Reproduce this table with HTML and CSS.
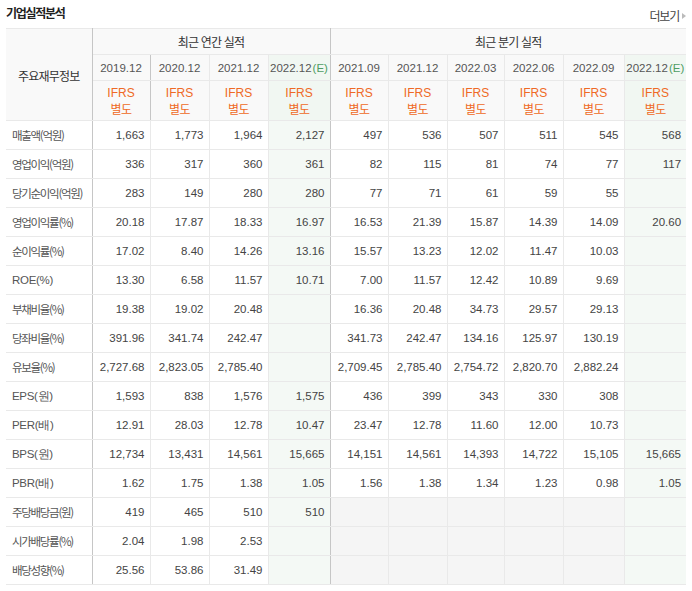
FILE: index.html
```html
<!DOCTYPE html>
<html lang="ko">
<head>
<meta charset="utf-8">
<title>기업실적분석</title>
<link rel="stylesheet" href="styles.css">
</head>
<body>
<div class="wrap">
  <div class="head">
    <h3 class="title">기업실적분석</h3>
    <a class="more" href="#">더보기<span class="tri"></span></a>
  </div>
  <table class="fin">
    <colgroup>
      <col class="c-lab"><col class="c58"><col class="c59"><col class="c59"><col class="c62">
      <col class="c58"><col class="c59"><col class="c57"><col class="c59"><col class="c61"><col class="c62">
    </colgroup>
    <thead>
      <tr class="h1">
        <th rowspan="3" class="lab-h">주요재무정보</th>
        <th colspan="4" class="sep">최근 연간 실적</th>
        <th colspan="6">최근 분기 실적</th>
      </tr>
      <tr class="h2">
        <th>2019.12</th><th>2020.12</th><th>2021.12</th><th class="est sep">2022.12<em>(E)</em></th>
        <th>2021.09</th><th>2021.12</th><th>2022.03</th><th>2022.06</th><th>2022.09</th><th class="est">2022.12<em>(E)</em></th>
      </tr>
      <tr class="h3">
        <th><span class="ifrs">IFRS</span><span class="kind">별도</span></th>
        <th><span class="ifrs">IFRS</span><span class="kind">별도</span></th>
        <th><span class="ifrs">IFRS</span><span class="kind">별도</span></th>
        <th class="est sep"><span class="ifrs">IFRS</span><span class="kind">별도</span></th>
        <th><span class="ifrs">IFRS</span><span class="kind">별도</span></th>
        <th><span class="ifrs">IFRS</span><span class="kind">별도</span></th>
        <th><span class="ifrs">IFRS</span><span class="kind">별도</span></th>
        <th><span class="ifrs">IFRS</span><span class="kind">별도</span></th>
        <th><span class="ifrs">IFRS</span><span class="kind">별도</span></th>
        <th class="est"><span class="ifrs">IFRS</span><span class="kind">별도</span></th>
      </tr>
    </thead>
    <tbody>
      <tr><th>매출액(억원)</th><td>1,663</td><td>1,773</td><td>1,964</td><td class="est sep">2,127</td><td>497</td><td>536</td><td>507</td><td>511</td><td>545</td><td class="est">568</td></tr>
      <tr><th>영업이익(억원)</th><td>336</td><td>317</td><td>360</td><td class="est sep">361</td><td>82</td><td>115</td><td>81</td><td>74</td><td>77</td><td class="est">117</td></tr>
      <tr><th>당기순이익(억원)</th><td>283</td><td>149</td><td>280</td><td class="est sep">280</td><td>77</td><td>71</td><td>61</td><td>59</td><td>55</td><td class="est"></td></tr>
    </tbody>
    <tbody>
      <tr><th>영업이익률(%)</th><td>20.18</td><td>17.87</td><td>18.33</td><td class="est sep">16.97</td><td>16.53</td><td>21.39</td><td>15.87</td><td>14.39</td><td>14.09</td><td class="est">20.60</td></tr>
      <tr><th>순이익률(%)</th><td>17.02</td><td>8.40</td><td>14.26</td><td class="est sep">13.16</td><td>15.57</td><td>13.23</td><td>12.02</td><td>11.47</td><td>10.03</td><td class="est"></td></tr>
      <tr><th class="en">ROE(%)</th><td>13.30</td><td>6.58</td><td>11.57</td><td class="est sep">10.71</td><td>7.00</td><td>11.57</td><td>12.42</td><td>10.89</td><td>9.69</td><td class="est"></td></tr>
    </tbody>
    <tbody>
      <tr><th>부채비율(%)</th><td>19.38</td><td>19.02</td><td>20.48</td><td class="est sep"></td><td>16.36</td><td>20.48</td><td>34.73</td><td>29.57</td><td>29.13</td><td class="est"></td></tr>
      <tr><th>당좌비율(%)</th><td>391.96</td><td>341.74</td><td>242.47</td><td class="est sep"></td><td>341.73</td><td>242.47</td><td>134.16</td><td>125.97</td><td>130.19</td><td class="est"></td></tr>
      <tr><th>유보율(%)</th><td>2,727.68</td><td>2,823.05</td><td>2,785.40</td><td class="est sep"></td><td>2,709.45</td><td>2,785.40</td><td>2,754.72</td><td>2,820.70</td><td>2,882.24</td><td class="est"></td></tr>
    </tbody>
    <tbody>
      <tr><th class="en">EPS(원)</th><td>1,593</td><td>838</td><td>1,576</td><td class="est sep">1,575</td><td>436</td><td>399</td><td>343</td><td>330</td><td>308</td><td class="est"></td></tr>
      <tr><th class="en">PER(배)</th><td>12.91</td><td>28.03</td><td>12.78</td><td class="est sep">10.47</td><td>23.47</td><td>12.78</td><td>11.60</td><td>12.00</td><td>10.73</td><td class="est"></td></tr>
      <tr><th class="en">BPS(원)</th><td>12,734</td><td>13,431</td><td>14,561</td><td class="est sep">15,665</td><td>14,151</td><td>14,561</td><td>14,393</td><td>14,722</td><td>15,105</td><td class="est">15,665</td></tr>
      <tr><th class="en">PBR(배)</th><td>1.62</td><td>1.75</td><td>1.38</td><td class="est sep">1.05</td><td>1.56</td><td>1.38</td><td>1.34</td><td>1.23</td><td>0.98</td><td class="est">1.05</td></tr>
    </tbody>
    <tbody>
      <tr><th>주당배당금(원)</th><td>419</td><td>465</td><td>510</td><td class="est sep">510</td><td class="na"></td><td class="na"></td><td class="na"></td><td class="na"></td><td class="na"></td><td class="est"></td></tr>
      <tr><th>시가배당률(%)</th><td>2.04</td><td>1.98</td><td>2.53</td><td class="est sep"></td><td class="na"></td><td class="na"></td><td class="na"></td><td class="na"></td><td class="na"></td><td class="est"></td></tr>
      <tr><th>배당성향(%)</th><td>25.56</td><td>53.86</td><td>31.49</td><td class="est sep"></td><td class="na"></td><td class="na"></td><td class="na"></td><td class="na"></td><td class="na"></td><td class="est"></td></tr>
    </tbody>
  </table>
</div>
</body>
</html>
```

FILE: styles.css
```css
html, body {
  margin: 0;
  padding: 0;
  background: #fff;
}
body {
  font-family: "Noto Sans CJK KR", "Liberation Sans", sans-serif;
  color: #333;
}
.wrap {
  padding: 0 6px;
  width: 680px;
}
.head {
  height: 28px;
  display: flex;
  align-items: flex-start;
  justify-content: space-between;
}
.title {
  margin: 5px 0 0 0;
  font-size: 12px;
  line-height: 16px;
  font-weight: bold;
  letter-spacing: -1.3px;
  color: #222;
}
.more {
  margin-top: 8px;
  display: flex;
  align-items: center;
  font-size: 12px;
  line-height: 16px;
  letter-spacing: -1.2px;
  color: #444;
  text-decoration: none;
}
.tri {
  display: inline-block;
  margin-left: 3px;
  width: 0;
  height: 0;
  border-top: 3px solid transparent;
  border-bottom: 3px solid transparent;
  border-left: 4px solid #bbb;
}

.fin {
  width: 680px;
  table-layout: fixed;
  border-collapse: collapse;
  border-top: 1px solid #c6c6c6;
  border-bottom: 1px solid #c6c6c6;
}
.c-lab { width: 86px; }
.c57 { width: 57px; }
.c58 { width: 58px; }
.c59 { width: 59px; }
.c61 { width: 61px; }
.c62 { width: 62px; }

.fin th, .fin td {
  border: 1px solid #e9e9e9;
  padding: 0;
  font-weight: normal;
}
.fin tr > :first-child { border-left: none; border-right: 1px solid #c6c6c6; }
.fin tr > :last-child { border-right: none; }
.fin .sep { border-right: 1px solid #c6c6c6; }

.fin thead th {
  background: #f9f9f9;
  text-align: center;
  color: #444;
}
.fin thead .h1 th {
  height: 25px;
  font-size: 12px;
  letter-spacing: -0.8px;
  color: #333;
}
.fin thead .lab-h {
  font-size: 11.5px;
  letter-spacing: -1.6px;
  color: #555;
  padding-top: 1px;
}
.fin thead .h2 th {
  height: 25px;
  font-family: "Liberation Sans", sans-serif;
  font-size: 11.5px;
  color: #555;
}
.h2 em {
  font-style: normal;
  color: #4e9d62;
  margin-left: 1px;
}
.fin thead .h3 th {
  height: 39px;
  color: #ef6a25;
  line-height: 15px;
}
.ifrs {
  display: block;
  font-family: "Liberation Sans", sans-serif;
  font-size: 12px;
  line-height: 15px;
}
.kind {
  display: block;
  font-size: 12px;
  line-height: 15px;
  letter-spacing: -0.5px;
}
.fin thead .est { background: #f1f7f2; }
.fin thead tr.h3 { border-bottom: 1px solid #c6c6c6; }

.fin tbody + tbody tr:first-child > * { border-top: 1px solid #c6c6c6; }
.fin tbody th {
  height: 28px;
  text-align: left;
  padding-left: 6px;
  font-size: 11.5px;
  letter-spacing: -1.3px;
  color: #555;
  background: #fff;
  white-space: nowrap;
}
.fin tbody th.en {
  font-family: "Liberation Sans", sans-serif;
  letter-spacing: -0.3px;
}
.fin tbody td {
  height: 28px;
  text-align: right;
  padding-right: 5px;
  font-family: "Liberation Sans", sans-serif;
  font-size: 11.5px;
  color: #444;
  background: #fff;
}
.fin tbody td.est { background: #f4f9f5; }
.fin tbody td.na { background: #f5f5f5; }
```
